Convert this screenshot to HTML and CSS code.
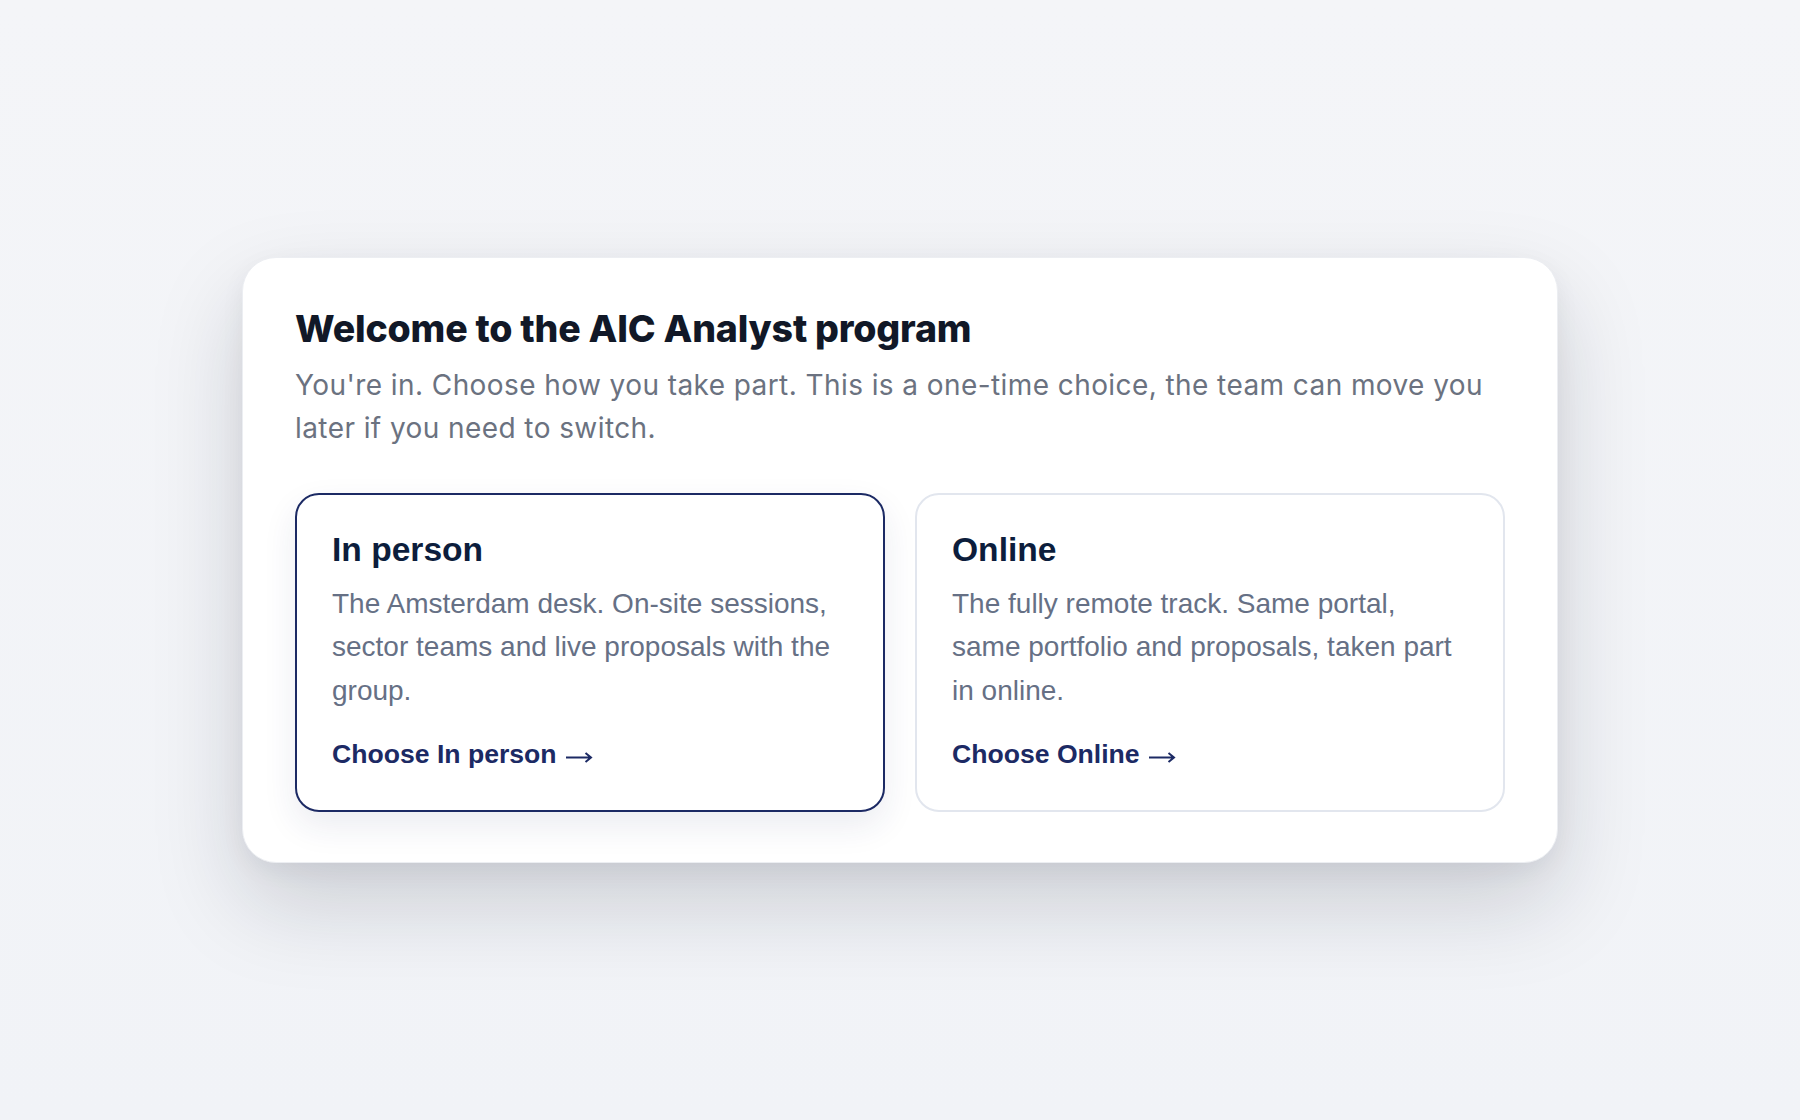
FILE: index.html
```html
<!DOCTYPE html>
<html lang="en">
<head>
  <meta charset="UTF-8" />
  <title>Welcome to the AIC Analyst program</title>
  <link rel="stylesheet" href="styles.css">
</head>
<body>
  <div class="welcome">
    <h1>Welcome to the AIC Analyst program</h1>
    <p class="lead">You're in. Choose how you take part. This is a one-time choice, the team can move you later if you need to switch.</p>

    <div class="choices">
      <a class="choice selected" href="#in-person">
        <h2>In person</h2>
        <p>The Amsterdam desk. On-site sessions, sector teams and live proposals with the group.</p>
        <span class="choose">Choose In person
          <svg class="arrow" viewBox="0 0 28 14" aria-hidden="true"><path d="M1 7.5H26M20.5 3L26 7.5L20.5 12"/></svg>
        </span>
      </a>
      <a class="choice" href="#online">
        <h2>Online</h2>
        <p>The fully remote track. Same portal, same portfolio and proposals, taken part in online.</p>
        <span class="choose">Choose Online
          <svg class="arrow" viewBox="0 0 28 14" aria-hidden="true"><path d="M1 7.5H26M20.5 3L26 7.5L20.5 12"/></svg>
        </span>
      </a>
    </div>
  </div>
</body>
</html>
```

FILE: styles.css
```css
html, body {
  height: 100%;
}

body {
  margin: 0;
  display: flex;
  align-items: center;
  justify-content: center;
  background: linear-gradient(180deg, #f4f5f8 0%, #f1f3f7 100%);
  font-family: "Liberation Sans", Arial, sans-serif;
}

.welcome {
  width: 1316px;
  box-sizing: border-box;
  padding: 49px 52px 50px;
  background: #fff;
  border: 1px solid #eceef2;
  border-radius: 34px;
  box-shadow: 0 40px 90px rgba(20, 24, 40, 0.17), 0 8px 24px rgba(20, 24, 40, 0.05);
}

h1 {
  margin: 0 0 13px;
  font-family: Inter, "Liberation Sans", sans-serif;
  font-weight: 800;
  font-size: 37.5px;
  line-height: 44px;
  letter-spacing: -0.005em;
  color: #111827;
}

.lead {
  margin: 0;
  font-family: Inter, "Liberation Sans", sans-serif;
  font-size: 28px;
  line-height: 43.5px;
  letter-spacing: 0.015em;
  color: #6b7280;
}

.choices {
  display: grid;
  grid-template-columns: 1fr 1fr;
  gap: 30px;
  margin-top: 42px;
}

.choice {
  display: block;
  padding: 35px 35px 36px;
  border: 2px solid #e2e6ee;
  border-radius: 24px;
  color: inherit;
  text-decoration: none;
  background: #fff;
}

.choice.selected {
  border-color: #1c2a64;
  box-shadow: 0 14px 34px rgba(28, 42, 100, 0.09);
}

.choice h2 {
  margin: 0 0 12px;
  font-size: 33.6px;
  line-height: 40px;
  font-weight: 700;
  color: #0c1d3c;
}

.choice p {
  margin: 0 0 22px;
  font-size: 28px;
  line-height: 43.4px;
  color: #667085;
}

.choose {
  display: block;
  font-size: 26.6px;
  line-height: 40px;
  font-weight: 700;
  color: #1c2a64;
}

.arrow {
  width: 28px;
  height: 14px;
  margin-left: 1px;
  vertical-align: -1px;
  fill: none;
  stroke: currentColor;
  stroke-width: 2;
}
```
